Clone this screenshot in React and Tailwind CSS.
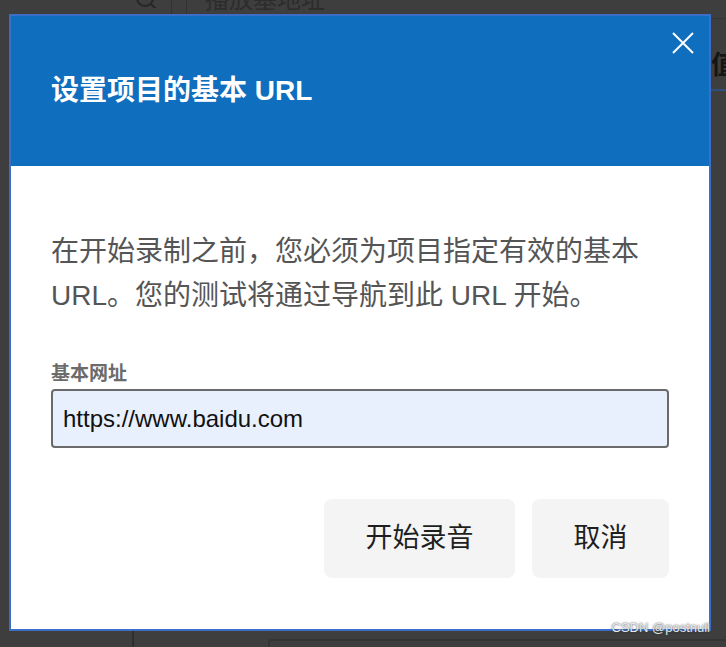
import React from 'react';

const cjk = "font-['Liberation_Sans','Noto_Sans_CJK_SC',sans-serif]";

function Backdrop() {
  return (
    <div className="absolute inset-0 bg-[#3e3e3e]">
      {/* faint app chrome behind the overlay */}
      <div className="flex items-start h-[14px] overflow-hidden">
        <div className="w-[133px]" />
        <svg width="30" height="14" viewBox="0 0 30 14" className="mt-[-6px]">
          <circle cx="12" cy="4" r="8" fill="none" stroke="#262626" strokeWidth="2" />
          <line x1="18" y1="10" x2="24" y2="16" stroke="#262626" strokeWidth="2" />
        </svg>
        <div className="ml-[8px] w-px h-[14px] bg-[#333]" />
        <div className="ml-[14px] w-px h-[14px] bg-[#333]" />
        <div className={`ml-[18px] mt-[-12px] text-[24px] leading-[24px] text-[#2c2c2c] ${cjk}`}>播放基地址</div>
      </div>
      <div className={`absolute left-[711px] top-[46px] text-[26px] font-bold text-[#151515] ${cjk}`}>值</div>
      <div className="absolute left-[711px] top-[89px] w-[15px] h-[2px] bg-[#2d4f7a]" />
      <div className="absolute left-[711px] top-[18px] w-[15px] h-px bg-[#353535]" />
      <div className="absolute left-[132px] top-[631px] w-[2px] h-[16px] bg-[#2e2e2e]" />
      <div className="absolute left-[268px] top-[639px] w-[460px] h-[12px] border-2 border-[#353535] rounded-[4px]" />
    </div>
  );
}

export default function App() {
  return (
    <div className="relative w-[726px] h-[647px] overflow-hidden">
      <Backdrop />

      <div className="absolute left-[9px] top-[14px] w-[702px] h-[617px] border-2 border-[#3a6ec7] bg-white flex flex-col">
        <div className="relative h-[151px] bg-[#106ebe] flex items-center pl-[40px]">
          <h2 className={`text-[28px] font-bold text-white ${cjk}`}>设置项目的基本 URL</h2>
          <button className="absolute right-[13px] top-[14px] w-[26px] h-[26px] flex items-center justify-center">
            <svg width="24" height="24" viewBox="0 0 24 24">
              <path d="M2 2 L22 22 M22 2 L2 22" stroke="white" strokeWidth="2" fill="none" />
            </svg>
          </button>
        </div>

        <div className="flex-1 flex flex-col px-[40px] pt-[64px] pb-[51px]">
          <p className={`text-[28px] leading-[44px] text-[#555] ${cjk}`}>
            在开始录制之前，您必须为项目指定有效的基本 URL。您的测试将通过导航到此 URL 开始。
          </p>

          <label className={`mt-[43px] text-[19px] leading-[26px] font-bold text-[#6b6b6b] ${cjk}`}>基本网址</label>
          <div className={`mt-[2px] h-[59px] border-2 border-[#6a6a6a] rounded-[4px] bg-[#e8f0fe] flex items-center px-[10px] text-[24px] text-[#111] ${cjk}`}>
            https://www.baidu.com
          </div>

          <div className="mt-[51px] flex justify-end gap-[17px]">
            <button className={`w-[191px] h-[79px] rounded-[8px] bg-[#f4f4f4] text-[27px] text-[#1e1e1e] ${cjk}`}>开始录音</button>
            <button className={`w-[137px] h-[79px] rounded-[8px] bg-[#f4f4f4] text-[27px] text-[#1e1e1e] ${cjk}`}>取消</button>
          </div>
        </div>
      </div>

      <div className={`absolute right-[16px] top-[618px] text-[13px] text-[#e8e8e8] [text-shadow:0_0_2px_#333] ${cjk}`}>CSDN @postnull</div>
    </div>
  );
}
